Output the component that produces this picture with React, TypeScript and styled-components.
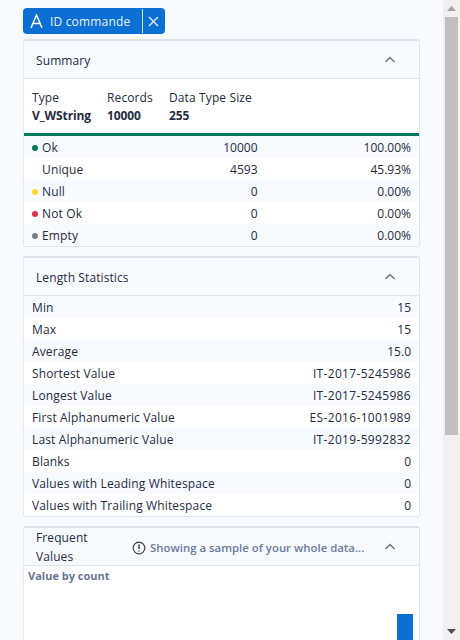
import styled, { createGlobalStyle } from 'styled-components';

const GlobalStyle = createGlobalStyle`
  html, body {
    margin: 0;
    height: 640px;
    overflow: hidden;
    background: #f7faff;
  }
`;

const Page = styled.div`
  display: flex;
  width: 460px;
  height: 640px;
  overflow: hidden;
  font-family: 'Open Sans', 'Noto Sans', sans-serif;
  font-size: 12px;
  color: #252b42;
`;

const Main = styled.main`
  flex: 1;
  min-width: 0;
  box-sizing: border-box;
  padding: 8px 23px 0 23px;
  overflow: hidden;
`;

const Chip = styled.div`
  display: inline-flex;
  align-items: center;
  height: 26px;
  width: 142px;
  box-sizing: border-box;
  padding-left: 7px;
  border-radius: 4px;
  background: #0b6fd3;
  color: #e8f2fc;
  margin-bottom: 5px;
  vertical-align: top;
`;

const ChipLabel = styled.span`
  margin-left: 7px;
  width: 92px;
  letter-spacing: 0.17px;
  white-space: nowrap;
`;

const ChipDivider = styled.span`
  width: 1px;
  height: 24px;
  background: #cfe3f7;
`;

const ChipClose = styled.span`
  display: flex;
  align-items: center;
  justify-content: center;
  flex: 1;
  padding-right: 1px;
`;

const Card = styled.section`
  box-sizing: border-box;
  width: 397px;
  margin-bottom: 9px;
  background: #fff;
  border: 1px solid #dfe4ef;
  border-top-width: 2px;
  border-top-color: #dde1ec;
  border-radius: 3px;
  border-left-color: #e3e7f0;
`;

const CardHeader = styled.header`
  display: flex;
  align-items: center;
  height: 38px;
  box-sizing: border-box;
  padding: 2px 23px 0 12px;
  background: #f7faff;
  border-bottom: 1px solid #dfe4ef;
  letter-spacing: 0.1px;
  & > svg:last-child {
    margin-top: -2px;
  }
`;

const CardTitle = styled.div<{ $narrow?: boolean }>`
  flex: ${({ $narrow }) => ($narrow ? '0 0 96px' : '1')};
  padding-right: ${({ $narrow }) => ($narrow ? '30px' : '0')};
  box-sizing: border-box;
  margin-top: ${({ $narrow }) => ($narrow ? '-1px' : '0')};
  line-height: 19px;
`;

const Notice = styled.div`
  flex: 1;
  display: flex;
  align-items: center;
  gap: 4px;
  color: #6a7a9c;
  font-weight: 600;
  font-size: 11.4px;
  letter-spacing: 0;
  white-space: nowrap;
`;

const Info = styled.div`
  display: flex;
  height: 57px;
  box-sizing: border-box;
  padding: 10px 8px 0;
  border-bottom: 3px solid #047a5f;
`;

const InfoCol = styled.div<{ $w: number }>`
  width: ${({ $w }) => $w}px;
  line-height: 18px;
  letter-spacing: 0.12px;
  white-space: nowrap;
  & > b {
    display: block;
    font-weight: 700;
    letter-spacing: -0.1px;
  }
`;

const Row = styled.div<{ $columns?: boolean }>`
  display: grid;
  grid-template-columns: ${({ $columns }) => ($columns ? '1fr 72px 1fr' : '1fr auto')};
  align-items: center;
  height: 22px;
  padding: 0 8px;
  background: #fff;
  white-space: nowrap;
  &:nth-child(odd) {
    background: #f7faff;
  }
`;

const RowLabel = styled.span`
  display: flex;
  align-items: center;
  letter-spacing: 0.14px;
`;

const Dot = styled.span<{ $color?: string }>`
  width: 6px;
  height: 6px;
  border-radius: 50%;
  margin: 2px 4px 0 0;
  background: ${({ $color }) => $color || 'transparent'};
`;

const Num = styled.span<{ $code?: boolean }>`
  text-align: right;
  letter-spacing: ${({ $code }) => ($code ? '0.33px' : '0')};
`;

const Chart = styled.div`
  display: flex;
  flex-direction: column;
  height: 80px;
  box-sizing: border-box;
  padding: 2px 6px 0 4px;
  overflow: hidden;
  color: #6a7595;
  font-weight: 700;
  font-size: 11px;
  line-height: 15px;
`;

const Bar = styled.div`
  flex: none;
  align-self: flex-end;
  width: 16px;
  height: 40px;
  margin-top: 31px;
  background: #0b6fd3;
`;

const Scrollbar = styled.aside`
  flex: 0 0 17px;
  display: flex;
  flex-direction: column;
  align-items: center;
  background: #f0f0f0;
`;

const ArrowBox = styled.div`
  flex: 0 0 17px;
  display: flex;
  align-items: center;
  justify-content: center;
`;

const Thumb = styled.div`
  width: 13px;
  height: 418px;
  background: #c0c0c0;
`;

const Track = styled.div`
  flex: 1;
`;

const Chevron = () => (
  <svg width="12" height="12" viewBox="0 0 12 12" fill="none" stroke="#6c7078" strokeWidth="1.4">
    <path d="M1.5 8 L6 3.6 L10.5 8" />
  </svg>
);

const summary = [
  ['#047a5f', 'Ok', '10000', '100.00%'],
  ['', 'Unique', '4593', '45.93%'],
  ['#fdd835', 'Null', '0', '0.00%'],
  ['#dc3552', 'Not Ok', '0', '0.00%'],
  ['#7b7d85', 'Empty', '0', '0.00%'],
];

const lengthStats = [
  ['Min', '15'],
  ['Max', '15'],
  ['Average', '15.0'],
  ['Shortest Value', 'IT-2017-5245986'],
  ['Longest Value', 'IT-2017-5245986'],
  ['First Alphanumeric Value', 'ES-2016-1001989'],
  ['Last Alphanumeric Value', 'IT-2019-5992832'],
  ['Blanks', '0'],
  ['Values with Leading Whitespace', '0'],
  ['Values with Trailing Whitespace', '0'],
];

export default function App() {
  return (
    <Page>
      <GlobalStyle />
      <Main>
        <Chip>
          <svg width="13" height="14" viewBox="0 0 13 14" fill="none" stroke="#fff" strokeWidth="1.5">
            <path d="M1 14 L6.5 1 L12 14 M3 9.4 H10" />
          </svg>
          <ChipLabel>ID commande</ChipLabel>
          <ChipDivider />
          <ChipClose>
            <svg width="11" height="11" viewBox="0 0 11 11" stroke="#cfe3f7" strokeWidth="1.5">
              <path d="M1 1 L10 10 M10 1 L1 10" />
            </svg>
          </ChipClose>
        </Chip>

        <Card>
          <CardHeader>
            <CardTitle>Summary</CardTitle>
            <Chevron />
          </CardHeader>
          <Info>
            <InfoCol $w={75}>Type<b>V_WString</b></InfoCol>
            <InfoCol $w={62}>Records<b>10000</b></InfoCol>
            <InfoCol $w={100}>Data Type Size<b>255</b></InfoCol>
          </Info>
          <div>
            {summary.map(([color, label, count, pct]) => (
              <Row $columns key={label}>
                <RowLabel>
                  <Dot $color={color} />
                  {label}
                </RowLabel>
                <Num>{count}</Num>
                <Num>{pct}</Num>
              </Row>
            ))}
          </div>
        </Card>

        <Card>
          <CardHeader>
            <CardTitle>Length Statistics</CardTitle>
            <Chevron />
          </CardHeader>
          <div>
            {lengthStats.map(([label, value]) => (
              <Row key={label}>
                <RowLabel>{label}</RowLabel>
                <Num $code={value.length > 10}>{value}</Num>
              </Row>
            ))}
          </div>
        </Card>

        <Card>
          <CardHeader>
            <CardTitle $narrow>Frequent Values</CardTitle>
            <Notice>
              <svg width="14" height="14" viewBox="0 0 14 14" fill="none" stroke="#3c4048" strokeWidth="1.2">
                <circle cx="7" cy="7" r="5.8" />
                <path d="M7 3.6 V8 M7 9.4 V10.6" strokeWidth="1.5" />
              </svg>
              Showing a sample of your whole data...
            </Notice>
            <Chevron />
          </CardHeader>
          <Chart>
            Value by count
            <Bar />
          </Chart>
        </Card>
      </Main>
      <Scrollbar>
        <ArrowBox>
          <svg width="9" height="5" viewBox="0 0 9 5"><path d="M4.5 0 L9 5 H0 Z" fill="#a3a3a3" /></svg>
        </ArrowBox>
        <Thumb />
        <Track />
        <ArrowBox>
          <svg width="9" height="5" viewBox="0 0 9 5"><path d="M0 0 H9 L4.5 5 Z" fill="#505050" /></svg>
        </ArrowBox>
      </Scrollbar>
    </Page>
  );
}
